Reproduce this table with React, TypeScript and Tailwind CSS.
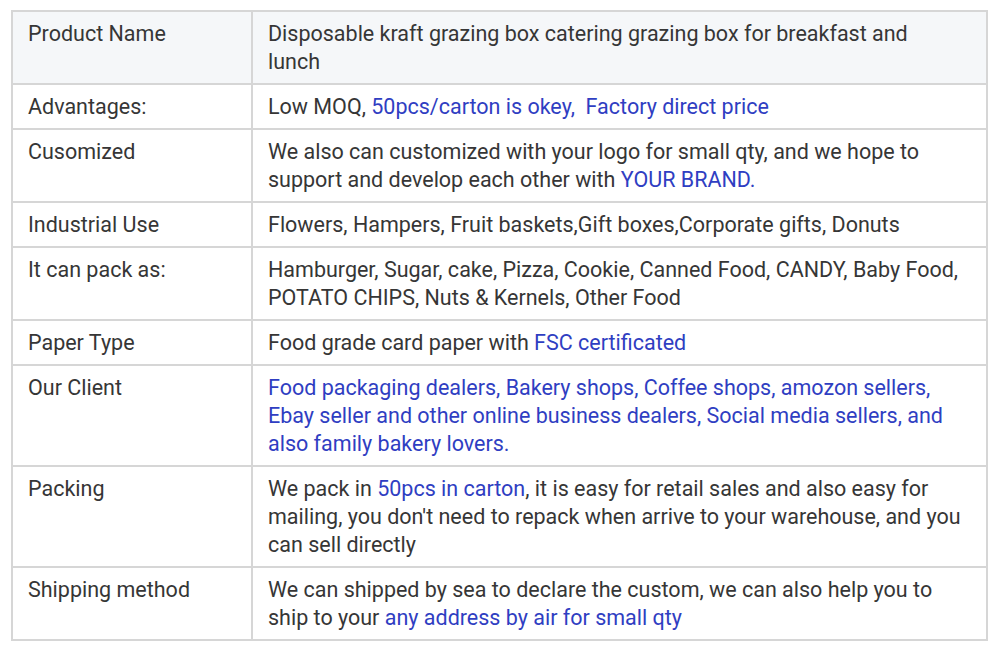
const B = ({ children }: { children: React.ReactNode }) => (
  <span className="text-[#2f3ec2]">{children}</span>
);

const rows: { label: string; value: React.ReactNode; head?: boolean }[] = [
  {
    label: "Product Name",
    value: "Disposable kraft grazing box catering grazing box for breakfast and lunch",
    head: true,
  },
  {
    label: "Advantages:",
    value: (
      <>
        Low MOQ, <B>50pcs/carton is okey, {"\u00a0"}Factory direct price</B>
      </>
    ),
  },
  {
    label: "Cusomized",
    value: (
      <>
        We also can customized with your logo for small qty, and we hope to support and develop each
        other with <B>YOUR BRAND.</B>
      </>
    ),
  },
  {
    label: "Industrial Use",
    value: "Flowers, Hampers, Fruit baskets,Gift boxes,Corporate gifts, Donuts",
  },
  {
    label: "It can pack as:",
    value:
      "Hamburger, Sugar, cake, Pizza, Cookie, Canned Food, CANDY, Baby Food, POTATO CHIPS, Nuts & Kernels, Other Food",
  },
  {
    label: "Paper Type",
    value: (
      <>
        Food grade card paper with <B>FSC certificated</B>
      </>
    ),
  },
  {
    label: "Our Client",
    value: (
      <B>
        Food packaging dealers, Bakery shops, Coffee shops, amozon sellers, Ebay seller and other online
        business dealers, Social media sellers, and also family bakery lovers.
      </B>
    ),
  },
  {
    label: "Packing",
    value: (
      <>
        We pack in <B>50pcs in carton</B>, it is easy for retail sales and also easy for mailing, you
        don't need to repack when arrive to your warehouse, and you can sell directly
      </>
    ),
  },
  {
    label: "Shipping method",
    value: (
      <>
        We can shipped by sea to declare the custom, we can also help you to ship to your{" "}
        <B>any address by air for small qty</B>
      </>
    ),
  },
];

export default function App() {
  return (
    <div className="w-[1000px] h-[656px] bg-white pt-[10px] pl-[11px] font-['Roboto',sans-serif] text-[21.5px] leading-[28px] text-[#363636]">
      <table className="w-[977px] table-fixed border-collapse">
        <colgroup>
          <col className="w-[240px]" />
          <col />
        </colgroup>
        <tbody>
          {rows.map((r) => (
            <tr key={r.label} className={r.head ? "bg-[#f5f7f9]" : "bg-white"}>
              <td className="border-2 border-[#d6d6d6] pl-[15px] pr-2 pt-[8px] pb-[7px] align-top">{r.label}</td>
              <td className="border-2 border-[#d6d6d6] pl-[15px] pr-[22px] pt-[8px] pb-[7px] align-top">{r.value}</td>
            </tr>
          ))}
        </tbody>
      </table>
    </div>
  );
}
